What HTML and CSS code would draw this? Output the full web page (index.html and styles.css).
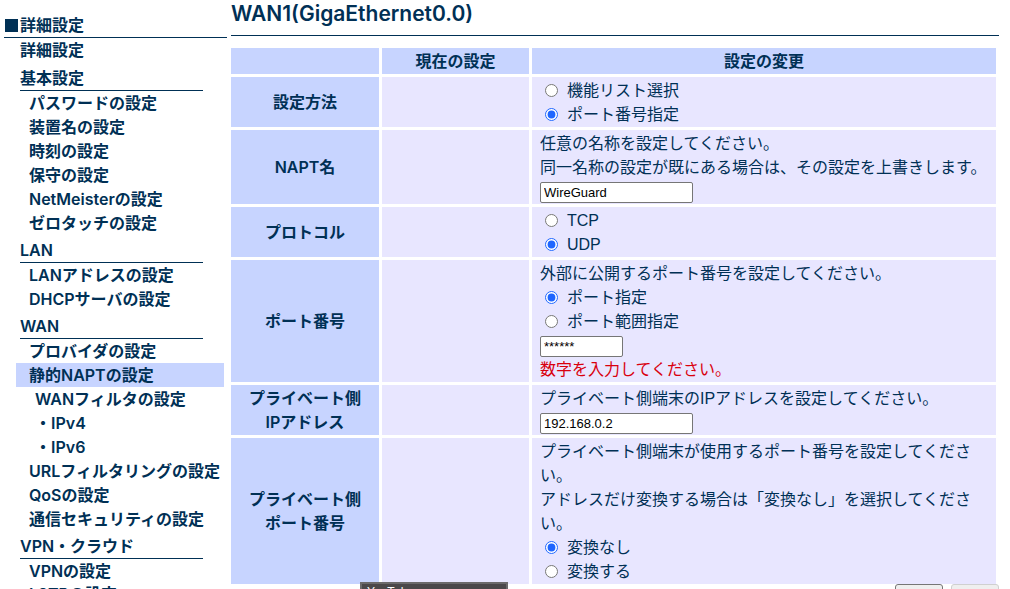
FILE: index.html
```html
<!DOCTYPE html>
<html lang="ja">
<head>
<meta charset="utf-8">
<title>WAN1(GigaEthernet0.0)</title>
<link rel="stylesheet" href="styles.css">
</head>
<body>
<div class="page">
  <nav class="side">
    <h2 class="side-title"><span class="square"></span>詳細設定</h2>
    <div class="menu">
      <a class="top-link" href="#">詳細設定</a>
      <h3 class="group first">基本設定</h3>
      <ul class="list">
        <li><a href="#">パスワードの設定</a></li>
        <li><a href="#">装置名の設定</a></li>
        <li><a href="#">時刻の設定</a></li>
        <li><a href="#">保守の設定</a></li>
        <li><a href="#">NetMeisterの設定</a></li>
        <li><a href="#">ゼロタッチの設定</a></li>
      </ul>
      <h3 class="group">LAN</h3>
      <ul class="list">
        <li><a href="#">LANアドレスの設定</a></li>
        <li><a href="#">DHCPサーバの設定</a></li>
      </ul>
      <h3 class="group">WAN</h3>
      <ul class="list">
        <li><a href="#">プロバイダの設定</a></li>
        <li><a class="current" href="#">静的NAPTの設定</a></li>
        <li><a class="sub" href="#">WANフィルタの設定</a></li>
        <li><a class="sub" href="#">・IPv4</a></li>
        <li><a class="sub" href="#">・IPv6</a></li>
        <li><a href="#">URLフィルタリングの設定</a></li>
        <li><a href="#">QoSの設定</a></li>
        <li><a href="#">通信セキュリティの設定</a></li>
      </ul>
      <h3 class="group">VPN・クラウド</h3>
      <ul class="list">
        <li><a href="#">VPNの設定</a></li>
        <li><a class="last" href="#">L2TPの設定</a></li>
      </ul>
    </div>
  </nav>
  <main class="main">
    <h1 class="title">WAN1(GigaEthernet0.0)</h1>
    <form class="form">
      <table class="settings">
        <colgroup><col class="col-name"><col class="col-now"><col></colgroup>
        <thead>
          <tr><th></th><th>現在の設定</th><th>設定の変更</th></tr>
        </thead>
        <tbody>
          <tr>
            <th>設定方法</th><td></td>
            <td>
              <label class="choice"><input type="radio" name="method">機能リスト選択</label>
              <label class="choice"><input type="radio" name="method" checked>ポート番号指定</label>
            </td>
          </tr>
          <tr>
            <th>NAPT名</th><td></td>
            <td>
              <label for="napt">任意の名称を設定してください。<br>同一名称の設定が既にある場合は、その設定を上書きします。</label>
              <div class="entry"><input class="text" id="napt" type="text" value="WireGuard"></div>
            </td>
          </tr>
          <tr>
            <th>プロトコル</th><td></td>
            <td>
              <label class="choice"><input type="radio" name="proto">TCP</label>
              <label class="choice"><input type="radio" name="proto" checked>UDP</label>
            </td>
          </tr>
          <tr>
            <th>ポート番号</th><td></td>
            <td>
              <label for="port">外部に公開するポート番号を設定してください。</label>
              <label class="choice"><input type="radio" name="port-kind" checked>ポート指定</label>
              <label class="choice"><input type="radio" name="port-kind">ポート範囲指定</label>
              <div class="entry"><input class="text short" id="port" type="text" value="******"></div>
              <div class="error">数字を入力してください。</div>
            </td>
          </tr>
          <tr>
            <th>プライベート側<br>IPアドレス</th><td></td>
            <td>
              <label for="ip">プライベート側端末のIPアドレスを設定してください。</label>
              <div class="entry"><input class="text" id="ip" type="text" value="192.168.0.2"></div>
            </td>
          </tr>
          <tr>
            <th>プライベート側<br>ポート番号</th><td></td>
            <td>
              プライベート側端末が使用するポート番号を設定してください。<br>アドレスだけ変換する場合は「変換なし」を選択してください。
              <label class="choice"><input type="radio" name="convert" checked>変換なし</label>
              <label class="choice"><input type="radio" name="convert">変換する</label>
            </td>
          </tr>
        </tbody>
      </table>
      <div class="actions">
        <button class="button" type="button" aria-label="設定"></button>
        <button class="button" type="button" aria-label="戻る" disabled></button>
      </div>
    </form>
  </main>
  <div class="tooltip">YouTube</div>
</div>
</body>
</html>
```
FILE: styles.css
```css
* {
  box-sizing: border-box;
}

body {
  margin: 0;
  background: #fff;
  color: #003055;
  font: 16px/24px "Liberation Sans", "Noto Sans CJK JP", sans-serif;
}

.page {
  position: relative;
  display: flex;
  gap: 4px;
  height: 100vh;
  padding: 0 11px 0 4px;
  overflow: hidden;
}

.side,
.title,
.settings th {
  font-family: Inter, "Noto Sans CJK JP", sans-serif;
  font-weight: 600;
}

.side {
  flex: 0 0 223px;
  padding-top: 13px;
  white-space: nowrap;
}

.side-title {
  display: flex;
  align-items: center;
  gap: 2px;
  margin: 0;
  border-bottom: 1px solid #003055;
  font-size: 16px;
  font-weight: 600;
}

.square {
  width: 13px;
  height: 13px;
  margin-left: 1px;
  background: #003055;
}

.menu {
  padding: 0 3px 0 12px;
}

.menu a {
  display: block;
  color: inherit;
  text-decoration: none;
}

.menu .top-link {
  padding-left: 4px;
}

.group {
  margin: 3px 21px 0 4px;
  border-bottom: 1px solid #003055;
  font-size: 16px;
  font-weight: 600;
}

.group.first {
  margin-top: 4px;
}

.list {
  margin: 0;
  padding: 0;
  list-style: none;
}

.list a {
  padding-left: 13px;
}

.list .sub {
  padding-left: 19px;
}

.list .current {
  background: #c7d4ff;
}

.list .last {
  line-height: 22px;
}

.main {
  flex: 1;
  min-width: 0;
}

.title {
  margin: 0 0 9px;
  padding: 2px 0 9px;
  border-bottom: 1px solid #003055;
  font-size: 21px;
}

.settings {
  width: calc(100% + 3px);
  margin-left: -3px;
  border-spacing: 3px;
  table-layout: fixed;
}

.col-name {
  width: 148px;
}

.col-now {
  width: 147px;
}

.settings th {
  height: 26px;
  padding: 1px;
  background: #c7d4ff;
}

.settings td {
  padding: 2px 6px 0 8px;
  background: #e8e6ff;
}

.settings label {
  display: block;
}

.settings .choice {
  display: flex;
  align-items: center;
}

.choice input {
  width: 13px;
  height: 13px;
  margin: 0 9px 2px 5px;
  accent-color: #1f66ff;
}

.entry {
  display: flex;
  align-items: center;
  height: 24px;
}

.text {
  width: 153px;
  height: 21px;
  padding: 1px 3px;
  border: 1px solid #767676;
  border-radius: 2px;
  background: #fff;
  color: #000;
  font: 13px "Liberation Sans", sans-serif;
}

.text.short {
  width: 83px;
}

.error {
  color: #d9000d;
}

.actions {
  display: flex;
  justify-content: flex-end;
  gap: 8px;
  margin-top: -3px;
}

.button {
  width: 48px;
  height: 22px;
  padding: 0;
  border: 1px solid #767676;
  border-radius: 3px;
  background: #efefef;
}

.button:disabled {
  border-color: #d0d0d0;
}

.tooltip {
  position: absolute;
  bottom: -15px;
  left: 360px;
  width: 148px;
  height: 22px;
  padding: 0 5px;
  border: 2px solid #6c6a6b;
  background: #4b484a;
  color: #fff;
  font-size: 12px;
  line-height: 16px;
}
```
